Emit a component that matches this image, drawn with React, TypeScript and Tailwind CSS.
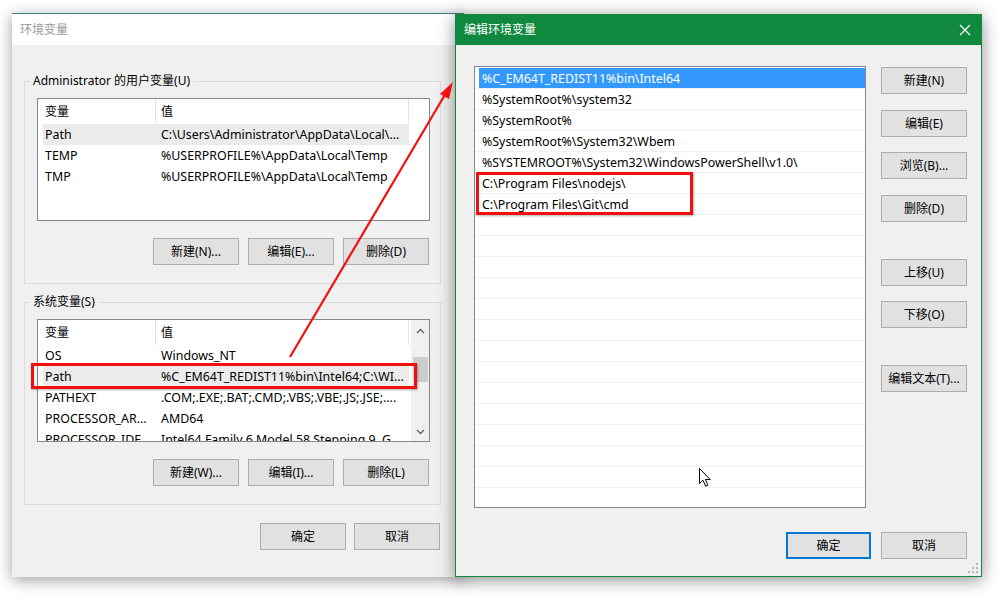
import React from "react";

const FONT = "font-['Noto_Sans','Noto_Sans_CJK_SC',sans-serif]";

function Btn({ label, className = "" }: { label: string; className?: string }) {
  return (
    <div
      className={`h-[27px] w-[86px] flex items-center justify-center bg-[#e1e1e1] border border-[#adadad] text-[12px] text-black leading-none ${className}`}
    >
      {label}
    </div>
  );
}

type Row = { name: string; value: string; sel?: boolean };

function VarList({ rows, scroll }: { rows: Row[]; scroll?: boolean }) {
  return (
    <div className="relative h-[123px] w-[393px] border border-[#828790] bg-white overflow-hidden flex">
      <div className="flex-1 flex flex-col">
        <div className="h-[25px] flex items-center shrink-0 text-[12px]">
          <div className="w-[118px] h-full flex items-center pl-[7px] pt-[1px] border-r border-[#e5e5e5]">变量</div>
          <div className="w-[253px] h-full flex items-center pl-[5px] pt-[1px] border-r border-[#e5e5e5]">值</div>
        </div>
        {rows.map((r, i) => (
          <div key={i} className="h-[21px] shrink-0 flex items-center text-[12.4px] whitespace-nowrap">
            <div className={`ml-[5px] w-[366px] h-full flex items-center pt-[1px] ${r.sel ? "bg-[#ebebeb]" : ""}`}>
              <div className="w-[113px] pl-[2px] overflow-hidden">{r.name}</div>
              <div className="flex-1 pl-[5px] overflow-hidden">{r.value}</div>
            </div>
          </div>
        ))}
      </div>
      {scroll && (
        <div className="w-[18px] h-full bg-[#f0f0f0] flex flex-col items-center relative">
          <svg width="9" height="6" viewBox="0 0 9 6" className="mt-[8px]">
            <path d="M1 5 L4.5 1.5 L8 5" stroke="#606060" strokeWidth="1.3" fill="none" />
          </svg>
          <div className="mt-[23px] w-[15px] h-[25px] bg-[#cdcdcd]" />
          <div className="flex-1" />
          <svg width="9" height="6" viewBox="0 0 9 6" className="mb-[6px]">
            <path d="M1 1 L4.5 4.5 L8 1" stroke="#606060" strokeWidth="1.3" fill="none" />
          </svg>
        </div>
      )}
      {!scroll && <div className="w-[18px] h-full" />}
    </div>
  );
}

function Group({
  legend,
  rows,
  scroll,
  btns,
  className = "",
}: {
  legend: string;
  rows: Row[];
  scroll?: boolean;
  btns: string[];
  className?: string;
}) {
  return (
    <fieldset className={`w-[416px] border border-[#dcdcdc] pl-[12px] pr-[10px] pt-[9px] pb-[18px] ${className}`}>
      <legend className="-ml-[7px] px-[3px] text-[12px] leading-[16px] text-black">{legend}</legend>
      <VarList rows={rows} scroll={scroll} />
      <div className="mt-[17px] flex justify-end gap-[9px] pr-[1px]">
        {btns.map((b) => (
          <Btn key={b} label={b} />
        ))}
      </div>
    </fieldset>
  );
}

const pathRows = [
  "%C_EM64T_REDIST11%bin\\Intel64",
  "%SystemRoot%\\system32",
  "%SystemRoot%",
  "%SystemRoot%\\System32\\Wbem",
  "%SYSTEMROOT%\\System32\\WindowsPowerShell\\v1.0\\",
  "C:\\Program Files\\nodejs\\",
  "C:\\Program Files\\Git\\cmd",
];

export default function App() {
  const listRows = Array.from({ length: 22 }, (_, i) => pathRows[i] ?? "");
  return (
    <div className={`relative w-[1002px] h-[597px] bg-white overflow-hidden text-black ${FONT}`}>
      {/* Left window */}
      <div className="absolute left-[12px] top-[13px] w-[452px] h-[564px] flex flex-col border-t border-[#3f7f86] shadow-[0_3px_14px_rgba(0,0,0,0.38)]">
        <div className="h-[31px] shrink-0 bg-white flex items-center pl-[8px] text-[12px] text-[#9a9a9a]">环境变量</div>
        <div className="flex-1 bg-[#f0f0f0] pl-[12px] pt-[28px] flex flex-col">
          <Group
            legend="Administrator 的用户变量(U)"
            rows={[
              { name: "Path", value: "C:\\Users\\Administrator\\AppData\\Local\\...", sel: true },
              { name: "TEMP", value: "%USERPROFILE%\\AppData\\Local\\Temp" },
              { name: "TMP", value: "%USERPROFILE%\\AppData\\Local\\Temp" },
            ]}
            btns={["新建(N)...", "编辑(E)...", "删除(D)"]}
          />
          <Group
            className="mt-[10px]"
            legend="系统变量(S)"
            scroll
            rows={[
              { name: "OS", value: "Windows_NT" },
              { name: "Path", value: "%C_EM64T_REDIST11%bin\\Intel64;C:\\WI...", sel: true },
              { name: "PATHEXT", value: ".COM;.EXE;.BAT;.CMD;.VBS;.VBE;.JS;.JSE;...." },
              { name: "PROCESSOR_AR...", value: "AMD64" },
              { name: "PROCESSOR_IDE...", value: "Intel64 Family 6 Model 58 Stepping 9, G..." },
            ]}
            btns={["新建(W)...", "编辑(I)...", "删除(L)"]}
          />
          <div className="mt-[18px] w-[416px] flex justify-end gap-[8px]">
            <Btn label="确定" />
            <Btn label="取消" />
          </div>
        </div>
      </div>

      {/* Right window */}
      <div className="absolute left-[455px] top-[14px] w-[527px] h-[563px] flex flex-col border border-[#10893e] bg-[#f0f0f0] shadow-[0_3px_16px_rgba(0,0,0,0.45)]">
        <div className="h-[30px] shrink-0 bg-[#10893e] flex items-center justify-between pl-[8px] pr-[6px] text-[12px] text-white">
          <span>编辑环境变量</span>
          <svg width="20" height="20" viewBox="0 0 20 20" className="mt-[-1px]">
            <path d="M5 5 L15 15 M15 5 L5 15" stroke="white" strokeWidth="1.2" />
          </svg>
        </div>
        <div className="flex-1 flex flex-col pl-[18px] pr-[14px] pt-[21px] relative">
          <div className="flex">
            <div className="w-[392px] h-[442px] border border-[#828790] bg-white overflow-hidden pt-[1px]">
              {listRows.map((t, i) => (
                <div key={i} className="h-[21px] border-b border-[#f0f0f0] flex">
                  <div
                    className={`ml-[4px] flex-1 h-full flex items-center pl-[3px] pt-[2px] text-[12.4px] whitespace-nowrap ${
                      i === 0 ? "bg-[#3399ff] text-white" : ""
                    }`}
                  >
                    {t}
                  </div>
                </div>
              ))}
            </div>
            <div className="ml-[15px] flex flex-col">
              <Btn label="新建(N)" className="mt-[1px]" />
              <Btn label="编辑(E)" className="mt-[16px]" />
              <Btn label="浏览(B)..." className="mt-[15px]" />
              <Btn label="删除(D)" className="mt-[16px]" />
              <Btn label="上移(U)" className="mt-[37px]" />
              <Btn label="下移(O)" className="mt-[15px]" />
              <Btn label="编辑文本(T)..." className="mt-[37px]" />
            </div>
          </div>
          <div className="mt-[24px] flex justify-end gap-[10px]">
            <div className="h-[27px] w-[85px] flex items-center justify-center bg-[#e1e1e1] border-2 border-[#0078d7] text-[12px]">
              确定
            </div>
            <Btn label="取消" />
          </div>
          <svg width="10" height="10" viewBox="0 0 10 10" className="absolute right-[3px] bottom-[3px]">
            <g fill="#b8b8b8">
              <rect x="8" y="0" width="2" height="2" />
              <rect x="4" y="4" width="2" height="2" />
              <rect x="8" y="4" width="2" height="2" />
              <rect x="0" y="8" width="2" height="2" />
              <rect x="4" y="8" width="2" height="2" />
              <rect x="8" y="8" width="2" height="2" />
            </g>
          </svg>
        </div>
      </div>

      {/* Annotations */}
      <div className="absolute left-[31px] top-[363px] w-[386px] h-[26px] border-[3px] border-[#f01010] shadow-[1px_1px_2px_rgba(0,0,0,0.3)]" />
      <div className="absolute left-[476px] top-[172px] w-[217px] h-[43px] border-[3px] border-[#f01010] shadow-[1px_1px_2px_rgba(0,0,0,0.3)]" />
      <svg className="absolute left-0 top-0" width="1002" height="597" viewBox="0 0 1002 597">
        <line x1="290" y1="357" x2="446" y2="93" stroke="#f01010" strokeWidth="2.2" />
        <polygon points="453,82 449,99 440,94" fill="#f01010" />
      </svg>

      {/* Mouse cursor */}
      <svg className="absolute left-[699px] top-[468px]" width="14" height="20" viewBox="0 0 14 20">
        <path
          d="M0.5 0.5 L0.5 15.5 L4 12.3 L6.6 18.2 L8.9 17.2 L6.4 11.5 L11.2 11.5 Z"
          fill="white"
          stroke="black"
          strokeWidth="1"
          strokeLinejoin="miter"
        />
      </svg>
    </div>
  );
}
